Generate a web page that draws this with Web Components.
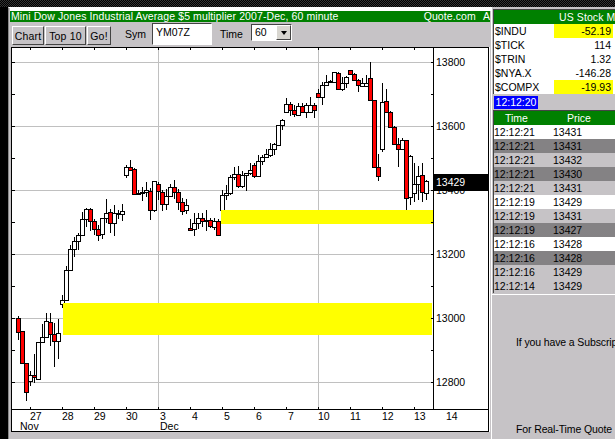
<!DOCTYPE html>
<html>
<head>
<meta charset="utf-8">
<title>Mini Dow</title>
<style>
  html,body{margin:0;padding:0;background:#c6c3c6;overflow:hidden}
  body{font-family:"Liberation Sans",Arial,sans-serif;font-size:10.5px;color:#000}
</style>
</head>
<body>
<quote-desk>
  <chart-window slot="chart"></chart-window>
  <side-panel slot="side"></side-panel>
</quote-desk>

<script>
const GRAY = "#c6c3c6";
const DARK = "#848284";
const GREEN = "#008000";

class QuoteDesk extends HTMLElement {
  constructor() {
    super();
    this.attachShadow({ mode: "open" });
  }
  connectedCallback() {
    this.shadowRoot.innerHTML = `
      <style>
        :host{display:grid;width:615px;height:439px;grid-template-rows:7px 1fr;grid-template-columns:8px 483px 124px;overflow:hidden;background:${GRAY}}
        .top{grid-column:1 / 4;background:repeating-conic-gradient(#000 0 25%,#333 0 50%) 0 0/2px 2px}
        .edge{background:#000}
      </style>
      <div class="top"></div>
      <div class="edge"></div>
      <slot name="chart"></slot>
      <slot name="side"></slot>
    `;
  }
}

class ChartWindow extends HTMLElement {
  constructor() {
    super();
    this.attachShadow({ mode: "open" });
  }
  connectedCallback() {
    this.shadowRoot.innerHTML = `
      <style>
        :host{display:flex;flex-direction:column;height:432px;background:${GRAY};border-left:1px solid #888;box-sizing:border-box;border-top:1px solid #fff}
        .white{height:3px;background:#fff;margin-left:1px}
        .title{margin-left:1px;height:11px;line-height:11px;background:${GREEN};color:#fff;display:flex;width:480px;box-sizing:border-box;padding-left:1px;letter-spacing:.1px;white-space:nowrap}
        .title .q{margin-left:auto;margin-right:7px}
        .chart{margin-left:2px}
      </style>
      <div class="white"></div>
      <div class="title"><span>Mini Dow Jones Industrial Average $5 multiplier 2007-Dec, 60 minute</span><span class="q">Quote.com</span><span>A</span></div>
      <tool-bar></tool-bar>
      <price-chart class="chart"></price-chart>
    `;
  }
}

class ToolBar extends HTMLElement {
  constructor() {
    super();
    this.attachShadow({ mode: "open" });
  }
  connectedCallback() {
    this.shadowRoot.innerHTML = `
      <style>
        :host{display:flex;align-items:flex-start;height:25px;padding-left:3px;box-sizing:border-box;background:${GRAY}}
        .btn{height:19px;margin-top:4px;margin-right:1px;box-sizing:border-box;line-height:18px;text-align:center;background:${GRAY};border:1px solid;border-color:#fff #444 #444 #fff;letter-spacing:.2px}
        .lbl{margin-top:5px;line-height:14px;white-space:nowrap}
        .sym{width:60px;height:22px;margin:1px 8px 0 7px;box-sizing:border-box;border:1px solid;border-color:#444 #fff #fff #444;background:#fff;padding:1px 3px;line-height:15px}
        .sel{width:41px;height:17px;margin:2px 0 0 7px;box-sizing:border-box;border:1px solid;border-color:#444 #fff #fff #444;background:#fff;display:flex;justify-content:space-between;line-height:14px;padding-left:3px}
        .arrow{width:15px;background:#d8d6d0;border:1px solid;border-color:#fff #444 #444 #fff;box-sizing:border-box;display:flex;align-items:center;justify-content:center}
        .arrow i{width:0;height:0;border:3px solid transparent;border-top:4px solid #000;border-bottom:0}
      </style>
      <div class="btn" style="width:32px">Chart</div>
      <div class="btn" style="width:41px">Top 10</div>
      <div class="btn" style="width:24px;margin-right:14px">Go!</div>
      <div class="lbl" style="width:20px">Sym</div>
      <div class="sym">YM07Z</div>
      <div class="lbl" style="width:24px">Time</div>
      <div class="sel"><span>60</span><div class="arrow"><i></i></div></div>
    `;
  }
}

// x, body top, body bottom, wick high, wick low, red
const CANDLES = [
  [18,318,332,316,340,1],[22,331,363,331,364,1],[26,363,392,363,401,1],[30,375,381,371,386,0],
  [34,375,377,354,383,1],[38,342,379,342,380,0],[42,337,342,324,342,0],[46,321,337,313,337,0],
  [50,322,334,313,346,1],[54,334,341,323,367,1],[58,333,341,319,359,0],[62,300,304,295,308,0],
  [66,270,300,266,300,0],[70,249,270,245,270,0],[74,241,249,237,257,0],[78,235,241,233,250,0],
  [82,219,235,212,235,0],[86,209,219,208,227,0],[90,209,221,208,231,1],[94,221,229,219,235,1],
  [98,229,235,225,241,1],[102,218,234,218,239,0],[106,213,218,199,223,0],[110,212,223,209,233,1],
  [114,213,223,205,236,0],[118,213,214,210,219,0],[122,211,214,204,221,0],
  [126,167,175,165,178,0],[130,167,170,160,171,1],[134,169,194,168,195,1],[138,193,194,190,195,0],
  [142,192,193,187,201,0],[146,190,192,182,197,0],[150,191,210,188,220,1],[154,181,210,181,212,0],
  [158,184,191,182,200,1],[162,192,204,190,211,1],[166,196,204,189,210,0],[170,187,196,184,197,0],
  [174,187,192,180,199,1],[178,192,202,189,210,1],[182,202,211,198,215,1],[186,205,210,199,214,0],
  [190,228,230,219,231,1],[194,223,229,213,236,0],[198,218,223,213,229,0],[202,218,221,213,227,1],
  [206,220,221,210,231,0],[210,220,226,218,228,1],[214,221,227,218,230,0],[218,221,235,219,235,1],
  [222,195,210,190,215,0],[226,193,195,185,200,0],[230,177,193,175,195,0],[234,174,177,167,180,0],
  [238,174,186,166,188,1],[242,175,186,171,188,0],[246,173,175,173,191,0],[250,170,173,163,175,0],
  [254,165,176,163,178,1],[258,161,176,155,177,0],[262,157,161,155,165,0],[266,154,157,149,158,0],
  [270,149,155,143,157,0],[274,144,149,143,155,0],[278,125,145,125,146,0],[282,120,125,119,130,0],
  [286,104,112,98,113,0],[290,104,110,102,116,1],[294,110,114,105,117,1],[298,106,115,103,116,0],
  [302,106,112,103,113,1],[306,105,112,103,118,0],[310,105,112,97,113,0],[314,105,110,103,118,1],
  [318,93,97,89,98,1],[322,85,97,82,105,0],[326,82,85,75,86,0],[330,81,82,80,83,0],
  [334,72,82,72,83,0],[338,73,89,72,89,1],[342,83,89,77,91,0],[346,77,83,76,88,0],
  [350,70,74,70,75,1],[354,74,80,73,81,1],[358,80,85,79,92,1],[362,83,86,78,87,0],
  [366,83,86,75,87,0],[370,78,100,62,101,1],[374,100,167,100,112,1],[378,167,176,154,181,1],
  [382,102,149,83,152,0],[386,101,112,89,113,1],[390,112,127,111,128,1],[394,127,144,126,145,1],
  [398,144,149,138,167,1],[402,140,149,138,150,0],[406,140,198,140,210,1],[410,156,197,155,205,0],
  [414,184,193,163,202,0],[418,176,184,166,200,0],[422,175,192,163,202,1],[426,181,193,180,200,0]
];

class PriceChart extends HTMLElement {
  constructor() {
    super();
    this.attachShadow({ mode: "open" });
  }
  connectedCallback() {
    // chart box starts at page (11,47), everything below is drawn in page coords
    let s = "";
    for (const y of [62,126,190,254,318,382]) s += `<path d="M12 ${y+.5}H433" stroke="#c0c0c0"/>`;
    for (const x of [158,318]) s += `<path d="M${x+.5} 48V409" stroke="#c0c0c0"/>`;
    for (const [x,t,b,h,l,red] of CANDLES) {
      s += `<path d="M${x+.5} ${h}V${l}" stroke="#000"/>`;
      s += `<rect x="${x-1.5}" y="${t+.5}" width="4" height="${Math.max(b-t,1)}" fill="${red?"#f00":"#fff"}" stroke="#000"/>`;
    }
    s += `<rect x="221" y="210" width="212" height="14" fill="#ff0"/>`;
    s += `<rect x="63" y="303" width="369" height="32" fill="#ff0"/>`;
    // frame and ticks
    s += `<path d="M433.5 47V409M11 409.5H488M11.5 47V431M11 47.5H488M488.5 47V431M11 431.5H489" stroke="#000" fill="none"/>`;
    for (let y = 62; y <= 382; y += 32) {
      s += `<path d="M12 ${y+.5}H15M431 ${y+.5}H434" stroke="#000"/>`;
    }
    for (let x = 30; x <= 430; x += 32) {
      s += `<path d="M${x+.5} 48V50M${x+.5} 407V409" stroke="#000"/>`;
    }
    [[13800,62],[13600,126],[13400,190],[13200,254],[13000,318],[12800,382]].forEach(([v,y]) => {
      s += `<text x="436" y="${y+4}">${v}</text>`;
    });
    s += `<rect x="434" y="174" width="54" height="17" fill="#000"/><text x="436" y="186" fill="#fff">13429</text>`;
    [["27",30],["28",62],["29",94],["30",126],["3",158],["4",190],["5",222],["6",254],["7",286],["10",318],["11",350],["12",382],["13",414],["14",446]].forEach(([d,x]) => {
      s += `<text x="${x + (d.length > 1 ? 0 : 2)}" y="420">${d}</text>`;
    });
    s += `<text x="20" y="430">Nov</text><text x="160" y="430">Dec</text>`;
    this.shadowRoot.innerHTML = `
      <style>
        :host{display:block;width:479px;height:385px;overflow:hidden;background:#fff}
        svg{display:block;margin:-47px 0 0 -11px}
        svg path,svg rect{shape-rendering:crispEdges}
        text{font:10.5px "Liberation Sans",Arial,sans-serif;fill:#000}
        text[fill="#fff"]{fill:#fff}
      </style>
      <svg width="490" height="440" viewBox="0 0 490 440">${s}</svg>
    `;
  }
}

class SidePanel extends HTMLElement {
  constructor() {
    super();
    this.attachShadow({ mode: "open" });
  }
  connectedCallback() {
    this.shadowRoot.innerHTML = `
      <style>
        :host{display:flex;flex-direction:column;height:432px;background:${GRAY};border-left:1px solid #fff;box-sizing:border-box}
        .clock{display:flex;height:13px;margin:2px 0 1px 2px}
        .clock span{background:#0000ff;color:#fff;width:44px;line-height:13px;text-align:center}
        .msg{flex:1;display:flex;flex-direction:column;justify-content:space-between;border-top:1px solid #fff;margin-top:1px;padding:41px 0 4px 24px;white-space:nowrap;overflow:hidden;letter-spacing:-.12px}
      </style>
      <quote-table></quote-table>
      <div class="clock"><span>12:12:20</span></div>
      <trade-table></trade-table>
      <div class="msg"><span>If you have a Subscrip</span><span>For Real-Time Quote</span></div>
    `;
  }
}

class QuoteTable extends HTMLElement {
  constructor() {
    super();
    this.attachShadow({ mode: "open" });
  }
  connectedCallback() {
    const rows = [
      ["$INDU","-52.19",1],["$TICK","114",0],["$TRIN","1.32",0],["$NYA.X","-146.28",0],["$COMPX","-19.93",1]
    ];
    this.shadowRoot.innerHTML = `
      <style>
        :host{display:block;margin:2px 0 0 1px;border-left:1px solid #444;border-top:1px solid #444;background:#fff;height:84px;overflow:hidden}
        .head{height:14px;line-height:14px;background:${GREEN};color:#fff;padding-left:65px;white-space:nowrap;letter-spacing:.1px}
        .row{display:grid;grid-template-columns:60px 59px 1fr;height:14px;line-height:14px}
        .n{padding-left:1px;white-space:nowrap}
        .v{text-align:right;padding-right:2px}
        .hi{background:#ff0}
      </style>
      <div class="head">US Stock M</div>
      ${rows.map(r => `<div class="row"><div class="n">${r[0]}</div><div class="v ${r[2] ? "hi" : ""}">${r[1]}</div></div>`).join("")}
    `;
  }
}

class TradeTable extends HTMLElement {
  constructor() {
    super();
    this.attachShadow({ mode: "open" });
  }
  connectedCallback() {
    const W = "#fff", L = GRAY, D = DARK;
    const rows = [
      ["12:12:21","13431",W],["12:12:21","13431",D],["12:12:21","13432",L],["12:12:21","13430",D],
      ["12:12:21","13431",L],["12:12:19","13429",W],["12:12:19","13431",L],["12:12:19","13427",D],
      ["12:12:16","13428",W],["12:12:16","13428",D],["12:12:16","13429",L],["12:12:14","13429",L]
    ];
    this.shadowRoot.innerHTML = `
      <style>
        :host{display:block;margin-left:1px;border-left:1px solid #444;border-top:1px solid #444}
        .row{display:grid;grid-template-columns:59px 1fr;height:14px;line-height:14px;white-space:nowrap}
        .head{background:${GREEN};color:#fff}
        .head div:first-child{padding-left:11px}
        .head div:last-child{padding-left:14px}
      </style>
      <div class="row head"><div>Time</div><div>Price</div></div>
      ${rows.map(r => `<div class="row" style="background:${r[2]}"><div>${r[0]}</div><div>${r[1]}</div></div>`).join("")}
    `;
  }
}

customElements.define("quote-desk", QuoteDesk);
customElements.define("chart-window", ChartWindow);
customElements.define("tool-bar", ToolBar);
customElements.define("price-chart", PriceChart);
customElements.define("side-panel", SidePanel);
customElements.define("quote-table", QuoteTable);
customElements.define("trade-table", TradeTable);
</script>
</body>
</html>
